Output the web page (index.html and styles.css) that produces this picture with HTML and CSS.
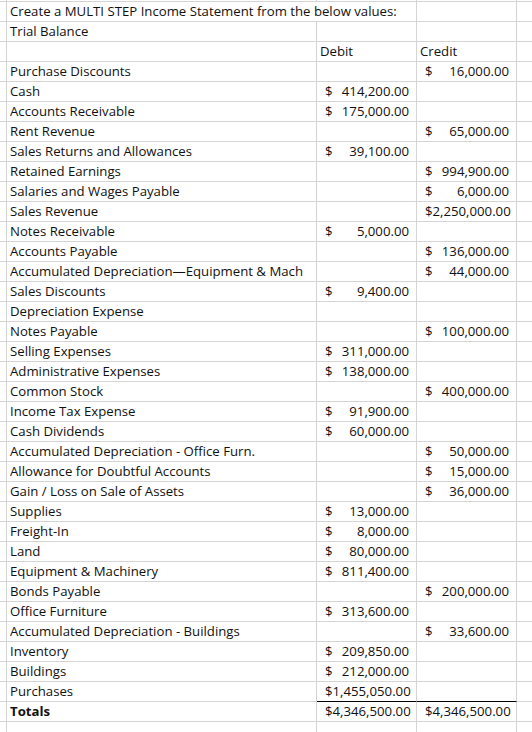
FILE: index.html
```html
<!DOCTYPE html>
<html>
<head>
<meta charset="utf-8">
<link rel="stylesheet" href="styles.css">
</head>
<body>
<div class="sheet">
  <div class="row stub"><div class="c g"></div><div class="c a"></div><div class="c b"></div><div class="c b"></div><div class="c d"></div></div>
  <div class="row"><div class="c g"></div><div class="c a span">Create a MULTI STEP Income Statement from the below values:</div><div class="c b"></div><div class="c d"></div></div>
  <div class="row"><div class="c g"></div><div class="c a">Trial Balance</div><div class="c b"></div><div class="c b"></div><div class="c d"></div></div>
  <div class="row"><div class="c g"></div><div class="c a"></div><div class="c b">Debit</div><div class="c b">Credit</div><div class="c d"></div></div>
  <div class="row"><div class="c g"></div><div class="c a">Purchase Discounts</div><div class="c b"></div><div class="c b m"><span>$</span><span>16,000.00</span></div><div class="c d"></div></div>
  <div class="row"><div class="c g"></div><div class="c a">Cash</div><div class="c b m"><span>$</span><span>414,200.00</span></div><div class="c b"></div><div class="c d"></div></div>
  <div class="row"><div class="c g"></div><div class="c a">Accounts Receivable</div><div class="c b m"><span>$</span><span>175,000.00</span></div><div class="c b"></div><div class="c d"></div></div>
  <div class="row"><div class="c g"></div><div class="c a">Rent Revenue</div><div class="c b"></div><div class="c b m"><span>$</span><span>65,000.00</span></div><div class="c d"></div></div>
  <div class="row"><div class="c g"></div><div class="c a">Sales Returns and Allowances</div><div class="c b m"><span>$</span><span>39,100.00</span></div><div class="c b"></div><div class="c d"></div></div>
  <div class="row"><div class="c g"></div><div class="c a">Retained Earnings</div><div class="c b"></div><div class="c b m"><span>$</span><span>994,900.00</span></div><div class="c d"></div></div>
  <div class="row"><div class="c g"></div><div class="c a">Salaries and Wages Payable</div><div class="c b"></div><div class="c b m"><span>$</span><span>6,000.00</span></div><div class="c d"></div></div>
  <div class="row"><div class="c g"></div><div class="c a">Sales Revenue</div><div class="c b"></div><div class="c b m"><span>$</span><span>2,250,000.00</span></div><div class="c d"></div></div>
  <div class="row"><div class="c g"></div><div class="c a">Notes Receivable</div><div class="c b m"><span>$</span><span>5,000.00</span></div><div class="c b"></div><div class="c d"></div></div>
  <div class="row"><div class="c g"></div><div class="c a">Accounts Payable</div><div class="c b"></div><div class="c b m"><span>$</span><span>136,000.00</span></div><div class="c d"></div></div>
  <div class="row"><div class="c g"></div><div class="c a">Accumulated Depreciation—Equipment &amp; Mach</div><div class="c b"></div><div class="c b m"><span>$</span><span>44,000.00</span></div><div class="c d"></div></div>
  <div class="row"><div class="c g"></div><div class="c a">Sales Discounts</div><div class="c b m"><span>$</span><span>9,400.00</span></div><div class="c b"></div><div class="c d"></div></div>
  <div class="row"><div class="c g"></div><div class="c a">Depreciation Expense</div><div class="c b"></div><div class="c b"></div><div class="c d"></div></div>
  <div class="row"><div class="c g"></div><div class="c a">Notes Payable</div><div class="c b"></div><div class="c b m"><span>$</span><span>100,000.00</span></div><div class="c d"></div></div>
  <div class="row"><div class="c g"></div><div class="c a">Selling Expenses</div><div class="c b m"><span>$</span><span>311,000.00</span></div><div class="c b"></div><div class="c d"></div></div>
  <div class="row"><div class="c g"></div><div class="c a">Administrative Expenses</div><div class="c b m"><span>$</span><span>138,000.00</span></div><div class="c b"></div><div class="c d"></div></div>
  <div class="row"><div class="c g"></div><div class="c a">Common Stock</div><div class="c b"></div><div class="c b m"><span>$</span><span>400,000.00</span></div><div class="c d"></div></div>
  <div class="row"><div class="c g"></div><div class="c a">Income Tax Expense</div><div class="c b m"><span>$</span><span>91,900.00</span></div><div class="c b"></div><div class="c d"></div></div>
  <div class="row"><div class="c g"></div><div class="c a">Cash Dividends</div><div class="c b m"><span>$</span><span>60,000.00</span></div><div class="c b"></div><div class="c d"></div></div>
  <div class="row"><div class="c g"></div><div class="c a">Accumulated Depreciation - Office Furn.</div><div class="c b"></div><div class="c b m"><span>$</span><span>50,000.00</span></div><div class="c d"></div></div>
  <div class="row"><div class="c g"></div><div class="c a">Allowance for Doubtful Accounts</div><div class="c b"></div><div class="c b m"><span>$</span><span>15,000.00</span></div><div class="c d"></div></div>
  <div class="row"><div class="c g"></div><div class="c a">Gain / Loss on Sale of Assets</div><div class="c b"></div><div class="c b m"><span>$</span><span>36,000.00</span></div><div class="c d"></div></div>
  <div class="row"><div class="c g"></div><div class="c a">Supplies</div><div class="c b m"><span>$</span><span>13,000.00</span></div><div class="c b"></div><div class="c d"></div></div>
  <div class="row"><div class="c g"></div><div class="c a">Freight-In</div><div class="c b m"><span>$</span><span>8,000.00</span></div><div class="c b"></div><div class="c d"></div></div>
  <div class="row"><div class="c g"></div><div class="c a">Land</div><div class="c b m"><span>$</span><span>80,000.00</span></div><div class="c b"></div><div class="c d"></div></div>
  <div class="row"><div class="c g"></div><div class="c a">Equipment &amp; Machinery</div><div class="c b m"><span>$</span><span>811,400.00</span></div><div class="c b"></div><div class="c d"></div></div>
  <div class="row"><div class="c g"></div><div class="c a">Bonds Payable</div><div class="c b"></div><div class="c b m"><span>$</span><span>200,000.00</span></div><div class="c d"></div></div>
  <div class="row"><div class="c g"></div><div class="c a">Office Furniture</div><div class="c b m"><span>$</span><span>313,600.00</span></div><div class="c b"></div><div class="c d"></div></div>
  <div class="row"><div class="c g"></div><div class="c a">Accumulated Depreciation - Buildings</div><div class="c b"></div><div class="c b m"><span>$</span><span>33,600.00</span></div><div class="c d"></div></div>
  <div class="row"><div class="c g"></div><div class="c a">Inventory</div><div class="c b m"><span>$</span><span>209,850.00</span></div><div class="c b"></div><div class="c d"></div></div>
  <div class="row"><div class="c g"></div><div class="c a">Buildings</div><div class="c b m"><span>$</span><span>212,000.00</span></div><div class="c b"></div><div class="c d"></div></div>
  <div class="row"><div class="c g"></div><div class="c a">Purchases</div><div class="c b m rule"><span>$</span><span>1,455,050.00</span></div><div class="c b rule"></div><div class="c d"></div></div>
  <div class="row"><div class="c g"></div><div class="c a bold">Totals</div><div class="c b m"><span>$</span><span>4,346,500.00</span></div><div class="c b m"><span>$</span><span>4,346,500.00</span></div><div class="c d"></div></div>
  <div class="row"><div class="c g"></div><div class="c a"></div><div class="c b"></div><div class="c b"></div><div class="c d"></div></div>
</div>
</body>
</html>
```

FILE: styles.css
```css
html, body {
  margin: 0;
  padding: 0;
  background: #ffffff;
}
body {
  width: 532px;
  height: 732px;
  overflow: hidden;
  font-family: "Open Sans", Lato, sans-serif;
  font-size: 13.2px;
  color: #111111;
}
.sheet {
  display: flex;
  flex-direction: column;
}
.row {
  display: grid;
  grid-template-columns: 7px 310px 100px 100px 1fr;
  height: 20px;
}
.row.stub {
  height: 2px;
}
.c {
  box-sizing: border-box;
  height: 100%;
  border-right: 1px solid #d4d4d4;
  border-bottom: 1px solid #d4d4d4;
  display: flex;
  align-items: flex-end;
  padding: 0 3px 1px 3px;
  line-height: 17px;
  white-space: nowrap;
}
.c.g { padding: 0; }
.c.d { border-right: none; }
.c.span {
  grid-column: span 2;
  overflow: visible;
}
.c.m {
  justify-content: space-between;
  padding-left: 8px;
  padding-right: 7px;
}
.c.rule {
  border-bottom-color: #000000;
}
.bold {
  font-weight: bold;
}
```
